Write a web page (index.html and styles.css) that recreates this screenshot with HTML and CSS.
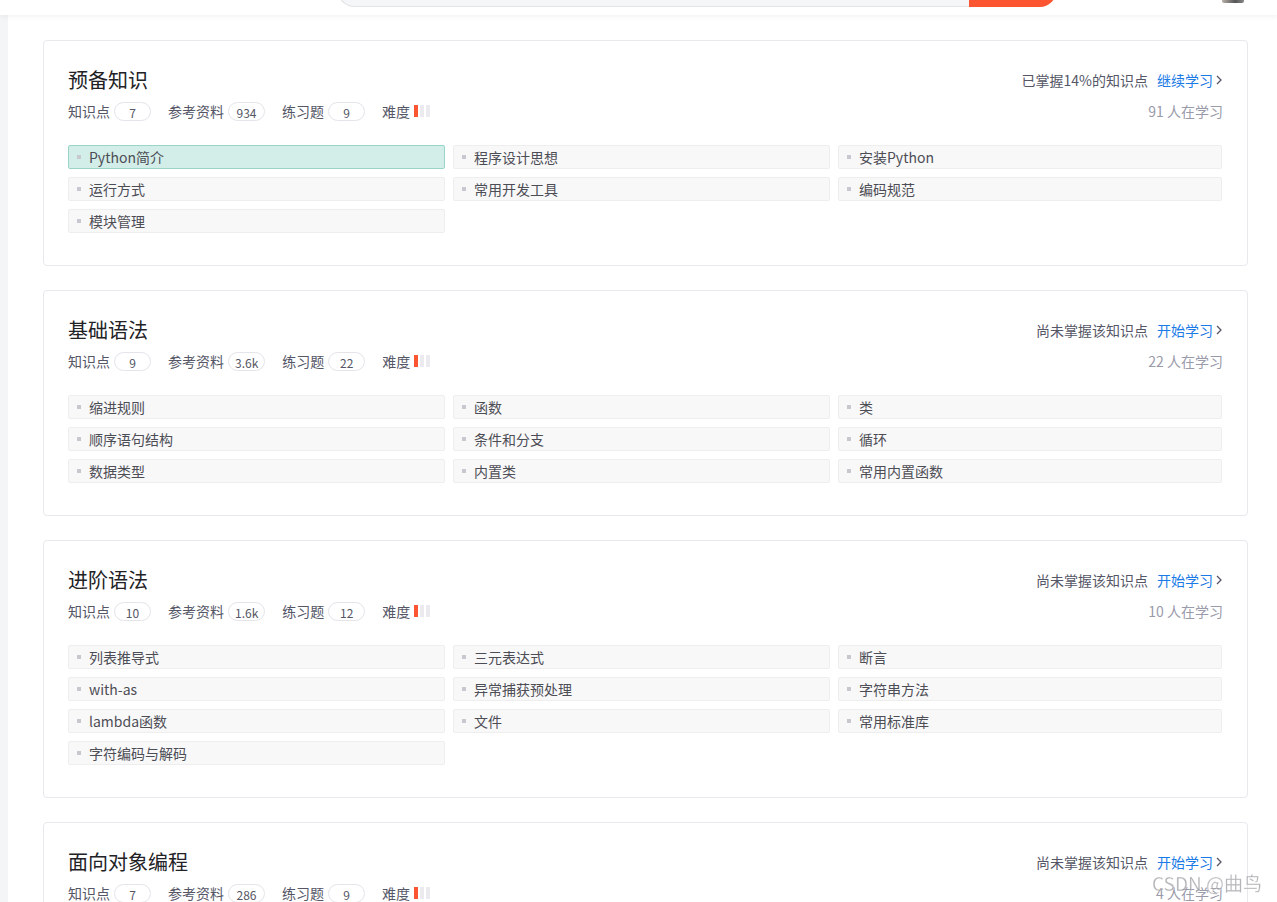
FILE: index.html
```html
<!DOCTYPE html>
<html lang="zh-CN">
<head>
    <meta charset="UTF-8">
    <meta name="viewport" content="width=device-width, initial-scale=1.0">
    <title>Python技能树</title>
    <link rel="stylesheet" href="styles.css">
</head>
<body>
    <!-- Barra superior con buscador -->
    <div class="toolbar">
        <div class="search">
            <span class="search-input"></span>
            <span class="search-btn"></span>
        </div>
        <span class="avatar"></span>
    </div>

    <div class="main">
        <!-- 预备知识 -->
        <div class="tree-card">
            <div class="card-head">
                <h2 class="card-title">预备知识</h2>
                <div class="progress">已掌握14%的知识点<a class="go" href="#">继续学习<svg viewBox="0 0 6 10" width="6" height="10"><path d="M1 1l4 4-4 4" fill="none" stroke="currentColor" stroke-width="1.3"/></svg></a></div>
            </div>
            <div class="card-meta">
                <div class="stats">
                    <span class="stat">知识点<em>7</em></span>
                    <span class="stat">参考资料<em>934</em></span>
                    <span class="stat">练习题<em>9</em></span>
                    <span class="stat">难度<i class="level"><b class="on"></b><b></b><b></b></i></span>
                </div>
                <div class="learners">91 人在学习</div>
            </div>
            <ul class="points">
                <li class="active">Python简介</li>
                <li>程序设计思想</li>
                <li>安装Python</li>
                <li>运行方式</li>
                <li>常用开发工具</li>
                <li>编码规范</li>
                <li>模块管理</li>
            </ul>
        </div>

        <!-- 基础语法 -->
        <div class="tree-card">
            <div class="card-head">
                <h2 class="card-title">基础语法</h2>
                <div class="progress">尚未掌握该知识点<a class="go" href="#">开始学习<svg viewBox="0 0 6 10" width="6" height="10"><path d="M1 1l4 4-4 4" fill="none" stroke="currentColor" stroke-width="1.3"/></svg></a></div>
            </div>
            <div class="card-meta">
                <div class="stats">
                    <span class="stat">知识点<em>9</em></span>
                    <span class="stat">参考资料<em>3.6k</em></span>
                    <span class="stat">练习题<em>22</em></span>
                    <span class="stat">难度<i class="level"><b class="on"></b><b></b><b></b></i></span>
                </div>
                <div class="learners">22 人在学习</div>
            </div>
            <ul class="points">
                <li>缩进规则</li>
                <li>函数</li>
                <li>类</li>
                <li>顺序语句结构</li>
                <li>条件和分支</li>
                <li>循环</li>
                <li>数据类型</li>
                <li>内置类</li>
                <li>常用内置函数</li>
            </ul>
        </div>

        <!-- 进阶语法 -->
        <div class="tree-card">
            <div class="card-head">
                <h2 class="card-title">进阶语法</h2>
                <div class="progress">尚未掌握该知识点<a class="go" href="#">开始学习<svg viewBox="0 0 6 10" width="6" height="10"><path d="M1 1l4 4-4 4" fill="none" stroke="currentColor" stroke-width="1.3"/></svg></a></div>
            </div>
            <div class="card-meta">
                <div class="stats">
                    <span class="stat">知识点<em>10</em></span>
                    <span class="stat">参考资料<em>1.6k</em></span>
                    <span class="stat">练习题<em>12</em></span>
                    <span class="stat">难度<i class="level"><b class="on"></b><b></b><b></b></i></span>
                </div>
                <div class="learners">10 人在学习</div>
            </div>
            <ul class="points">
                <li>列表推导式</li>
                <li>三元表达式</li>
                <li>断言</li>
                <li>with-as</li>
                <li>异常捕获预处理</li>
                <li>字符串方法</li>
                <li>lambda函数</li>
                <li>文件</li>
                <li>常用标准库</li>
                <li>字符编码与解码</li>
            </ul>
        </div>

        <!-- 面向对象编程 -->
        <div class="tree-card">
            <div class="card-head">
                <h2 class="card-title">面向对象编程</h2>
                <div class="progress">尚未掌握该知识点<a class="go" href="#">开始学习<svg viewBox="0 0 6 10" width="6" height="10"><path d="M1 1l4 4-4 4" fill="none" stroke="currentColor" stroke-width="1.3"/></svg></a></div>
            </div>
            <div class="card-meta">
                <div class="stats">
                    <span class="stat">知识点<em>7</em></span>
                    <span class="stat">参考资料<em>286</em></span>
                    <span class="stat">练习题<em>9</em></span>
                    <span class="stat">难度<i class="level"><b class="on"></b><b></b><b></b></i></span>
                </div>
                <div class="learners">4 人在学习</div>
            </div>
            <ul class="points">
                <li>类和对象</li>
                <li>封装</li>
                <li>继承</li>
                <li>多态</li>
            </ul>
        </div>
    </div>

    <div class="watermark">CSDN @曲鸟</div>
</body>
</html>
```
FILE: styles.css
```css
body {
    margin: 0;
    background: #fff;
    font-family: "Noto Sans CJK SC", "Open Sans", sans-serif;
    color: #222226;
    overflow: hidden;
}

/* Barra superior */
.toolbar {
    height: 15px;
    display: flex;
    align-items: flex-end;
    box-shadow: 0 2px 5px rgba(0, 0, 0, 0.05);
    position: relative;
    z-index: 2;
    overflow: hidden;
}

.search {
    display: flex;
    margin-left: 338px;
    margin-bottom: 8px;
    width: 718px;
    height: 32px;
    flex-shrink: 0;
}

.search-input {
    flex: 1;
    background: #f5f6f7;
    border: 1px solid #e3e4e8;
    border-right: none;
    border-radius: 16px 0 0 16px;
}

.search-btn {
    width: 87px;
    background: #fc5531;
    border-radius: 0 16px 16px 0;
}

.avatar {
    width: 22px;
    height: 22px;
    margin-left: 166px;
    margin-bottom: 12px;
    background: linear-gradient(90deg, #b8b0aa, #555 60%, #888);
    border-radius: 2px;
    flex-shrink: 0;
}

.main {
    border-left: 8px solid #f4f5f7;
    padding: 25px 29px 40px 35px;
    min-height: 900px;
}

/* Tarjetas */
.tree-card {
    border: 1px solid #e8e8ed;
    border-radius: 4px;
    padding: 25px 25px 32px 24px;
    margin-bottom: 24px;
}

.card-head,
.card-meta {
    display: flex;
    justify-content: space-between;
    align-items: center;
}

.card-head {
    height: 28px;
}

.card-title {
    margin: 0;
    font-size: 20px;
    font-weight: normal;
    line-height: 28px;
    color: #222226;
}

.progress {
    font-size: 14px;
    color: #555666;
    display: flex;
    align-items: center;
}

.go {
    color: #1a7ae6;
    text-decoration: none;
    margin-left: 9px;
    display: flex;
    align-items: center;
}

.go svg {
    margin-left: 3px;
    color: #555666;
}

.card-meta {
    margin-top: 7px;
    height: 20px;
}

.stats {
    display: flex;
    align-items: center;
}

.stat {
    display: flex;
    align-items: center;
    font-size: 14px;
    color: #555666;
    margin-right: 17px;
}

.stat em {
    font-style: normal;
    font-size: 12px;
    min-width: 37px;
    height: 19px;
    box-sizing: border-box;
    padding: 1px 6px 0;
    margin-left: 4px;
    border: 1px solid #e4e4ea;
    border-radius: 10px;
    line-height: 17px;
    text-align: center;
    color: #555666;
}

.level {
    display: flex;
    gap: 2px;
    margin-left: 4px;
}

.level b {
    width: 4px;
    height: 12px;
    background: #ebebef;
}

.level b.on {
    background: #fc5531;
}

.learners {
    font-size: 14px;
    color: #999aaa;
    margin-right: -1px;
}

/* Lista de puntos de conocimiento */
.points {
    list-style: none;
    margin: 24px 0 0;
    padding: 0;
    display: grid;
    grid-template-columns: 377px 377px 1fr;
    gap: 8px;
}

.points li {
    height: 24px;
    box-sizing: border-box;
    line-height: 22px;
    border: 1px solid #eeeeee;
    border-radius: 2px;
    background: #f8f8f9;
    font-size: 14px;
    color: #4d4d55;
    padding-left: 20px;
    position: relative;
}

.points li::before {
    content: "";
    position: absolute;
    left: 8px;
    top: 9px;
    width: 4px;
    height: 4px;
    background: #c8c8d0;
}

.points li.active {
    background: #d3ede8;
    border-color: #98d4c7;
}

.watermark {
    position: fixed;
    left: 1152px;
    top: 870px;
    font-size: 19px;
    line-height: 26px;
    color: rgba(150, 150, 155, 0.7);
    -webkit-text-stroke: 0.3px rgba(255, 255, 255, 0.6);
    z-index: 5;
}
```
